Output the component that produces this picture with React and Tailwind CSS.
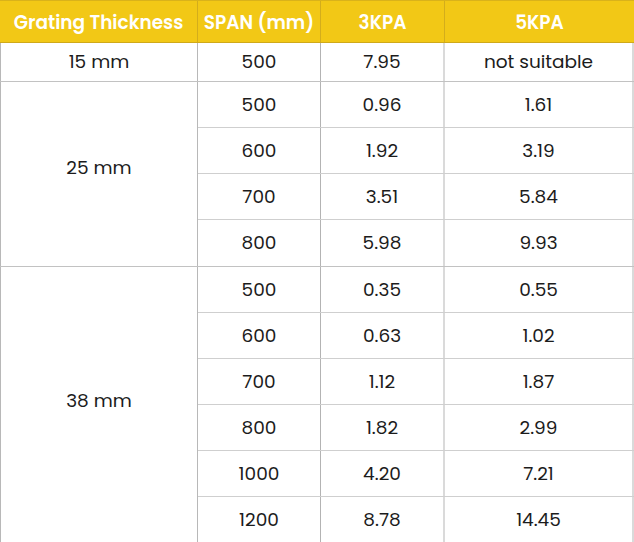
import React from 'react';

/* ── Data ── */
const groups = [
  { thickness: '15 mm', pad: '', rows: [['500', '7.95', 'not suitable']] },
  {
    thickness: '25 mm',
    pad: 'pb-3',
    rows: [
      ['500', '0.96', '1.61'],
      ['600', '1.92', '3.19'],
      ['700', '3.51', '5.84'],
      ['800', '5.98', '9.93'],
    ],
  },
  {
    thickness: '38 mm',
    pad: 'pb-2',
    rows: [
      ['500', '0.35', '0.55'],
      ['600', '0.63', '1.02'],
      ['700', '1.12', '1.87'],
      ['800', '1.82', '2.99'],
      ['1000', '4.20', '7.21'],
      ['1200', '8.78', '14.45'],
    ],
  },
];

function Cell({ children, className = '' }) {
  return (
    <div className={`flex items-center justify-center text-[18.5px] text-[#1c1c1c] ${className}`}>
      {children}
    </div>
  );
}

export default function App() {
  return (
    <div className="w-[634px] bg-white font-['Poppins','Open_Sans',sans-serif]">
      {/* header */}
      <div className="grid grid-cols-[198px_123px_124px_189px] h-[43px] bg-[#f2c816] border-t border-[#d9b21a] border-b border-b-[#cfa91a]">
        {['Grating Thickness', 'SPAN (mm)', '3KPA', '5KPA'].map((h, i) => (
          <div
            key={h}
            className={`flex items-center justify-center pt-0.5 text-white font-semibold text-[18.5px] ${i < 3 ? 'border-r border-[#d3ad1c]' : ''}`}
          >
            {h}
          </div>
        ))}
      </div>

      {/* body */}
      {groups.map((g) => (
        <div key={g.thickness} className="grid grid-cols-[198px_436px] border-b border-[#c2c2c2]">
          <Cell className={`border-l border-r border-[#b8b8b8] ${g.pad}`}>{g.thickness}</Cell>
          <div>
            {g.rows.map((r, i) => (
              <div
                key={r[0]}
                className={`grid grid-cols-[123px_124px_189px] ${g.rows.length === 1 ? 'h-[38px]' : 'h-[46px]'} ${i < g.rows.length - 1 ? 'border-b border-[#cfcfcf]' : ''}`}
              >
                <Cell className="border-r border-[#b3b3b3]">{r[0]}</Cell>
                <Cell className="border-r-2 border-[#dadada]">{r[1]}</Cell>
                <Cell className="border-r-2 border-[#dadada]">{r[2]}</Cell>
              </div>
            ))}
          </div>
        </div>
      ))}
    </div>
  );
}
